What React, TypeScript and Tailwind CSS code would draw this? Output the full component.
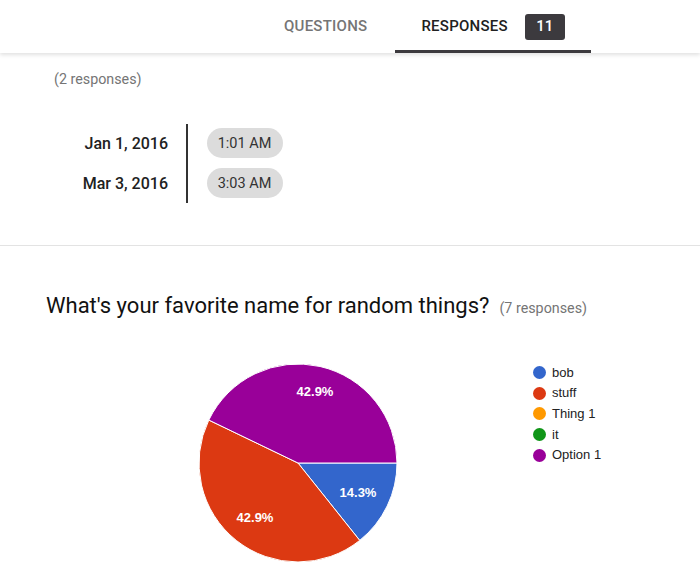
import React from 'react';

const slices = [
  { d: 'M110,110 L209,110 A99,99 0 0,1 171.73,187.4 Z', color: '#3366cc' },
  { d: 'M110,110 L171.73,187.4 A99,99 0 0,1 20.8,67.05 Z', color: '#dc3912' },
  { d: 'M110,110 L20.8,67.05 A99,99 0 0,1 209,110 Z', color: '#990099' },
];

const legend = [
  { label: 'bob', color: '#3366cc' },
  { label: 'stuff', color: '#dc3912' },
  { label: 'Thing 1', color: '#ff9900' },
  { label: 'it', color: '#109618' },
  { label: 'Option 1', color: '#990099' },
];

const times = [
  { date: 'Jan 1, 2016', time: '1:01 AM' },
  { date: 'Mar 3, 2016', time: '3:03 AM' },
];

export default function App() {
  return (
    <div className="w-[700px] h-[572px] overflow-hidden bg-white font-['Roboto',sans-serif]">
      {/* Tabs header */}
      <div className="relative z-10 h-[53px] bg-white flex pl-[257px] shadow-[0_2px_4px_rgba(0,0,0,0.12)]">
        <div className="flex items-center px-[27px] text-[15px] font-medium text-[#757575] tracking-[0.25px]">
          QUESTIONS
        </div>
        <div className="ml-px flex items-center pl-[26px] pr-[26px] border-b-[3px] border-[#3c3a3e]">
          <span className="text-[15px] font-medium text-[#212121] pt-[3px] tracking-[0.25px]">RESPONSES</span>
          <span className="ml-[17px] mt-[3px] w-[40px] h-[26px] rounded-[3px] bg-[#3c3a3e] text-white text-[15px] font-medium flex items-center justify-center">
            11
          </span>
        </div>
      </div>

      {/* Date / time question */}
      <div className="h-[193px] border-b-[1.5px] border-[#e3e3e3]">
        <div className="pl-[54px] pt-[16px] text-[14.3px] text-[#757575]">(2 responses)</div>
        <div className="mt-[34px] flex">
          <div className="w-[168px] flex flex-col items-end pt-[5px] gap-[10px]">
            {times.map((t) => (
              <div key={t.date} className="h-[30px] flex items-center text-[16px] font-medium text-[#212121]">
                {t.date}
              </div>
            ))}
          </div>
          <div className="ml-[18px] w-[1.5px] h-[79px] bg-[#333]" />
          <div className="ml-[19px] flex flex-col pt-[4px] gap-[10px]">
            {times.map((t) => (
              <div key={t.time} className="w-[76px] h-[30px] rounded-full bg-[#dcdcdc] flex items-center justify-center text-[14.5px] text-[#333]">
                {t.time}
              </div>
            ))}
          </div>
        </div>
      </div>

      {/* Multiple choice question */}
      <div className="pl-[46px] pt-[43px] flex items-baseline">
        <span className="text-[22px] text-[#111]">What's your favorite name for random things?</span>
        <span className="ml-[10px] text-[14.3px] text-[#757575]">(7 responses)</span>
      </div>

      <div className="mt-[31px] flex font-['Liberation_Sans',Arial,sans-serif]">
        <svg width="220" height="220" viewBox="0 0 220 220" className="ml-[188px] shrink-0">
          {slices.map((s) => (
            <path key={s.color} d={s.d} fill={s.color} stroke="#fff" strokeWidth="1" />
          ))}
          <text x="127" y="43" fill="#fff" fontSize="13" fontWeight="bold" textAnchor="middle">42.9%</text>
          <text x="170" y="144" fill="#fff" fontSize="13" fontWeight="bold" textAnchor="middle">14.3%</text>
          <text x="67" y="169" fill="#fff" fontSize="13" fontWeight="bold" textAnchor="middle">42.9%</text>
        </svg>
        <div className="ml-[125px] mt-[9px] flex flex-col">
          {legend.map((l) => (
            <div key={l.label} className="h-[20.7px] flex items-center text-[13px] text-[#222]">
              <span className="w-[13px] h-[13px] rounded-full mr-[6px]" style={{ backgroundColor: l.color }} />
              {l.label}
            </div>
          ))}
        </div>
      </div>
    </div>
  );
}
